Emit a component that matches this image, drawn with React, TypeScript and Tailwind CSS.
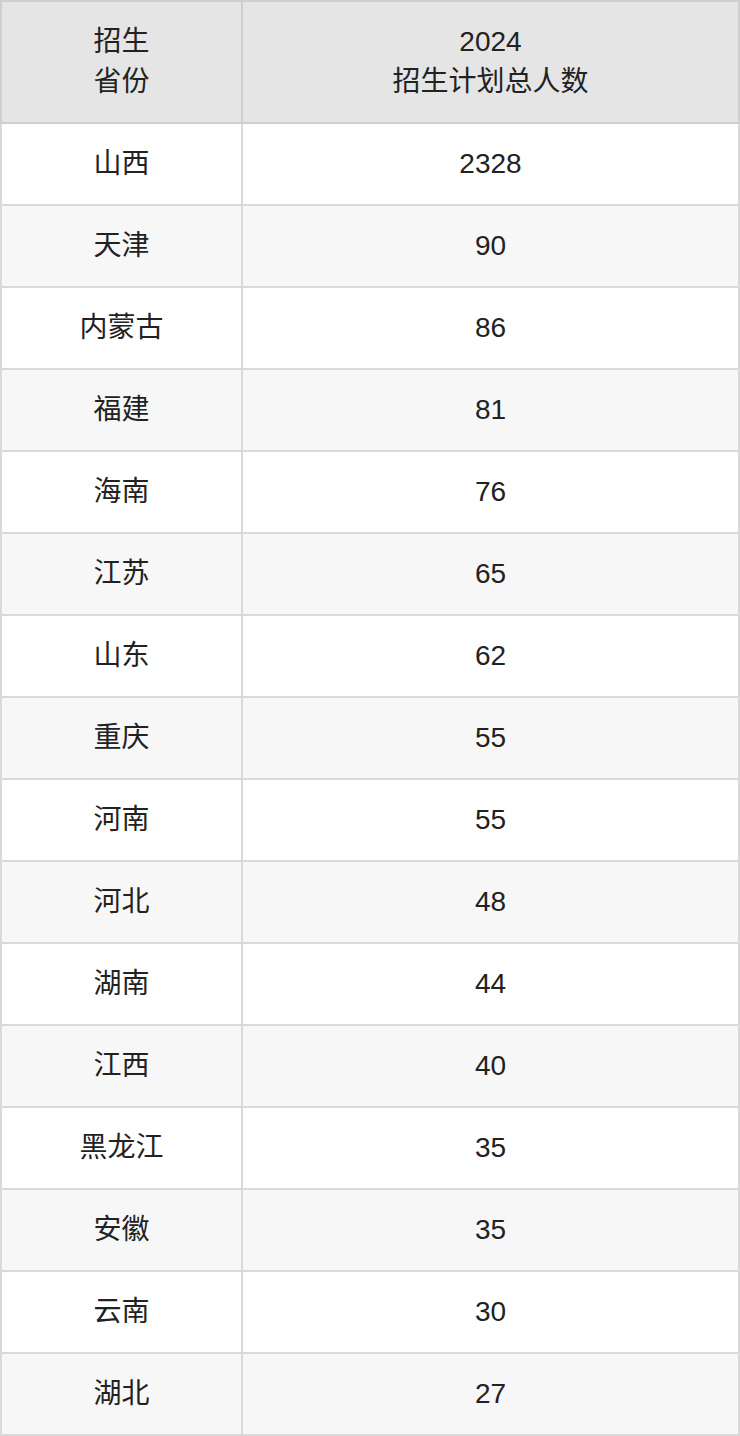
const rows: [string, string][] = [
  ["山西", "2328"],
  ["天津", "90"],
  ["内蒙古", "86"],
  ["福建", "81"],
  ["海南", "76"],
  ["江苏", "65"],
  ["山东", "62"],
  ["重庆", "55"],
  ["河南", "55"],
  ["河北", "48"],
  ["湖南", "44"],
  ["江西", "40"],
  ["黑龙江", "35"],
  ["安徽", "35"],
  ["云南", "30"],
  ["湖北", "27"],
];

export default function App() {
  return (
    <div className="w-[740px] bg-white font-['Liberation_Sans','Noto_Sans_CJK_SC',sans-serif] text-[28px] leading-[40px] text-[#222]">
      <table className="w-full border-collapse table-fixed">
        <thead>
          <tr className="bg-[#e5e5e5]">
            <th className="w-[241px] h-[122px] border-2 border-[#cfcfcf] font-normal text-center align-middle">
              招生
              <br />
              省份
            </th>
            <th className="h-[122px] border-2 border-[#cfcfcf] font-normal text-center align-middle">
              2024
              <br />
              招生计划总人数
            </th>
          </tr>
        </thead>
        <tbody>
          {rows.map(([name, count], i) => (
            <tr key={name + i} className={i % 2 === 0 ? "bg-white" : "bg-[#f7f7f7]"}>
              <td className="h-[82px] border-2 border-[#dadada] text-center align-middle">{name}</td>
              <td className="h-[82px] border-2 border-[#dadada] text-center align-middle">{count}</td>
            </tr>
          ))}
        </tbody>
      </table>
    </div>
  );
}
